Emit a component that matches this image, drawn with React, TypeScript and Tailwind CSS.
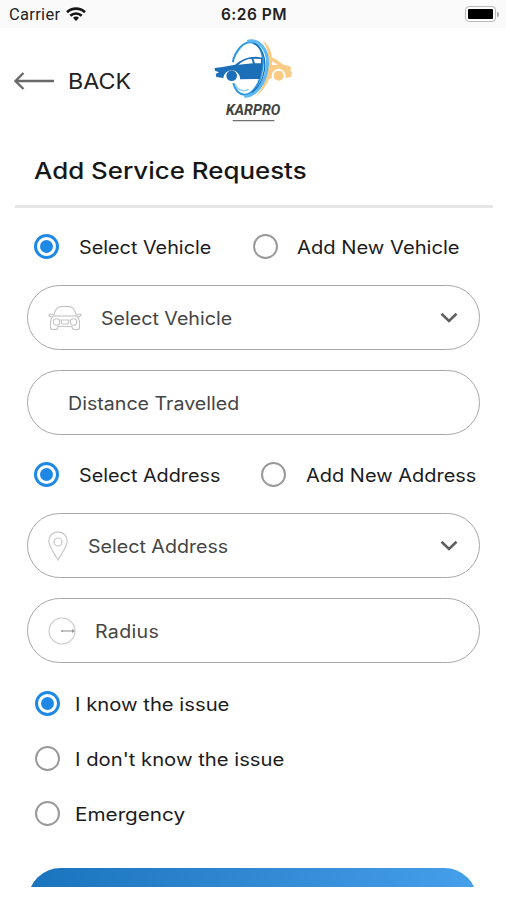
import React from 'react';
import clsx from 'clsx';

function Radio({ checked, label, className, labelClass }: { checked?: boolean; label: string; className?: string; labelClass?: string }) {
  return (
    <label className={clsx('flex items-center whitespace-nowrap text-[18px] leading-5 text-[#1c1c1c]', className)}>
      <span
        className={clsx(
          'flex size-[25px] shrink-0 items-center justify-center rounded-full',
          checked ? 'border-[3px] border-[#1e88e5]' : 'border-[2.5px] border-[#999]'
        )}
      >
        {checked && <span className="size-[13px] rounded-full bg-[#1e88e5]" />}
      </span>
      <span className={clsx('origin-left pt-[3px]', labelClass)}>{label}</span>
    </label>
  );
}

function Field({ icon, label, labelClass, select, className }: { icon?: React.ReactNode; label: string; labelClass?: string; select?: boolean; className?: string }) {
  return (
    <div className={clsx('flex h-[65px] items-center rounded-full border-[1.5px] border-[#a8a8a8] pr-[21px] pl-5 text-[18px] text-[#454545]', className)}>
      {icon}
      <span className={clsx('origin-left scale-x-[1.09] pt-0.5 whitespace-nowrap', labelClass)}>{label}</span>
      {select && (
        <svg className="ml-auto h-3 w-[18px]" viewBox="0 0 18 12" fill="none" stroke="#606060" strokeWidth="2.6">
          <path d="M1.5 1.8 9 9l7.5-7.2" />
        </svg>
      )}
    </div>
  );
}

function Logo() {
  return (
    <svg className="h-[84px] w-20" viewBox="39 27 240 252">
      <g transform="translate(30 20)">
        {/* rear car */}
        <g fill="#f9cb85">
          <path d="M158 14C181 24 190 58 185 94C181 130 162 163 137 178C158 154 170 124 174 90C178 56 172 32 158 14Z" />
          <path d="M182 61C198 66 208 74 217 83L240 89L244 96L240 101L246 107L243 121L226 124A21 21 0 1 0 186 124L176 127Z" />
          <circle cx="206" cy="117" r="15" />
        </g>
        <path d="M186 74L204 84L186 85Z" fill="#fff" />
        {/* ring */}
        <g fill="none">
          <path d="M68 77C76 42 99 15 124 17C151 21 163 54 157 96C151 139 129 174 104 174C87 173 75 160 70 139" stroke="#2d96df" strokeWidth="6" />
          <path d="M112 14C145 5 176 36 172 87C168 139 137 180 103 179" stroke="#5bb8f1" strokeWidth="9" />
          <path d="M130 20C155 29 169 62 163 101C157 134 143 156 125 167" stroke="#1971bb" strokeWidth="4" />
          <path d="M75 143C84 161 99 167 116 158" stroke="#8bd0f7" strokeWidth="4" />
        </g>
        {/* front car */}
        <path d="M14 94L38 91L75 84C94 68 113 60 137 60L158 63L157 90L150 127L90 128A24 24 0 1 0 40 124L19 121L17 112L27 107L15 102Z" fill="#1b6fb8" />
        <path d="M85 84C98 72 110 67 124 66L129 80Z" fill="#fff" />
        <path d="M130 66L153 67L153 80L135 80Z" fill="#fff" />
        <circle cx="65" cy="117" r="16" fill="#1b6fb8" />
      </g>
      <text x="78" y="254" textLength="163" lengthAdjust="spacingAndGlyphs" fontFamily="Roboto, sans-serif" fontSize="43" fontWeight="700" fontStyle="italic" fill="#424242">KARPRO</text>
      <path d="M98 272H223" stroke="#707070" strokeWidth="4" />
    </svg>
  );
}

function CarIcon() {
  return (
    <svg className="h-[26px] w-[34px] shrink-0" viewBox="0 0 34 26" fill="none" stroke="#c4c4c4" strokeWidth="1.1">
      <path d="M5.5 11C6.5 7 8 4 10 2.5C12 1 22 1 24 2.5C26 4 27.5 7 28.5 11" />
      <path d="M6 11H28" />
      <path d="M5.5 11C3 13 2.5 15 2.5 18V22.5Q2.5 24.5 4.5 24.5H8Q10 24.5 10 21.5H24Q24 24.5 26 24.5H29.5Q31.5 24.5 31.5 22.5V18C31.5 15 31 13 28.5 11" />
      <path d="M5.5 10.5C4 8.5 1 8.5 1 10Q1 11.5 4.5 12M28.5 10.5C30 8.5 33 8.5 33 10Q33 11.5 29.5 12" />
      <circle cx="8.5" cy="17" r="3.2" />
      <circle cx="25.5" cy="17" r="3.2" />
      <path d="M13 15H21L20 19H14Z" />
    </svg>
  );
}

function PinIcon() {
  return (
    <svg className="h-[30px] w-5 shrink-0" viewBox="0 0 20 30" fill="none" stroke="#c8c8c8" strokeWidth="1.2">
      <path d="M10 29C7 23 .8 16 .8 10A9.2 9.2 0 0 1 19.2 10C19.2 16 13 23 10 29Z" />
      <circle cx="10" cy="11" r="4" />
    </svg>
  );
}

function RadiusIcon() {
  return (
    <svg className="size-7 shrink-0" viewBox="0 0 28 28" fill="none" stroke="#c8c8c8" strokeWidth="1.1">
      <circle cx="14" cy="14" r="13" />
      <path d="M14 14H26" stroke="#999" />
      <circle cx="14" cy="14" r="1" fill="#999" stroke="none" />
      <path d="M24 12L27 14L24 16Z" fill="#999" stroke="none" />
    </svg>
  );
}

export default function App() {
  return (
    <div className="h-[900px] w-[506px] overflow-hidden bg-white font-['Inter',sans-serif]">
      {/* Status bar */}
      <div className="grid h-7 grid-cols-3 items-center bg-[#fafafa] pr-[7px] pl-[9px] text-[#222]">
        <div className="flex items-center gap-[6px]">
          <span className="pt-0.5 font-['Roboto',sans-serif] text-[16.5px] tracking-[0.3px]">Carrier</span>
          <svg className="h-[15px] w-5" viewBox="0 0 20 15" fill="none" stroke="#161616" strokeWidth="2.6">
            <path d="M1 5.2C6 .4 14 .4 19 5.2" />
            <path d="M4.3 8.8C7.5 5.7 12.5 5.7 15.7 8.8" />
            <path d="M7 10.8Q10 8.3 13 10.8L10 14Z" fill="#161616" stroke="none" />
          </svg>
        </div>
        <span className="pt-px text-center text-[15.5px] font-semibold tracking-[0.5px]">6:26 PM</span>
        <div className="flex items-center justify-end gap-px">
          <div className="h-4 w-[31px] rounded-[4px] border-[1.5px] border-[#bbb] p-[2px]">
            <div className="h-full rounded-[1px] bg-black" />
          </div>
          <div className="h-[5px] w-[2px] rounded-r bg-[#aaa]" />
        </div>
      </div>

      {/* Header */}
      <div className="grid h-[106px] grid-cols-3 pt-[11px]">
        <div className="flex h-[84px] items-center pl-[14px]">
          <svg className="h-[18px] w-10" viewBox="0 0 40 18" fill="none" stroke="#696969" strokeWidth="2.3">
            <path d="M40 9H1.5M9.5 1L1.5 9L9.5 17" />
          </svg>
          <span className="ml-[14px] origin-left scale-x-[1.08] text-[21.5px] text-[#222]">BACK</span>
        </div>
        <div className="flex justify-center">
          <Logo />
        </div>
      </div>

      <div className="mr-[13px] ml-[15px] flex h-[74px] border-b-[3px] border-[#e6e6e6] pt-[21px] pl-[19px]">
        <h1 className="origin-left scale-x-[1.125] text-[23px] leading-8 font-medium whitespace-nowrap text-[#161616]">Add Service Requests</h1>
      </div>

      {/* Form */}
      <div className="pr-[26px] pl-[27px]">
        <div className="flex h-[77px] items-center pl-[7px]">
          <Radio checked label="Select Vehicle" className="w-[219px]" labelClass="ml-5 scale-x-[1.1]" />
          <Radio label="Add New Vehicle" labelClass="ml-[19px] scale-x-[1.12]" />
        </div>
        <Field select icon={<CarIcon />} label="Select Vehicle" labelClass="ml-[19px]" />
        <Field label="Distance Travelled" className="mt-5" labelClass="ml-5" />

        <div className="flex h-[78px] items-center pl-[7px]">
          <Radio checked label="Select Address" className="w-[227px]" labelClass="ml-5 scale-x-[1.1]" />
          <Radio label="Add New Address" labelClass="ml-5 scale-x-[1.11]" />
        </div>
        <Field select icon={<PinIcon />} label="Select Address" labelClass="ml-5" />
        <Field icon={<RadiusIcon />} label="Radius" className="mt-5" labelClass="ml-[19px] tracking-[0.3px]" />

        <div className="mt-[28px] flex flex-col gap-[30px] pl-2">
          <Radio checked label="I know the issue" labelClass="ml-[15px] scale-x-[1.125]" />
          <Radio label="I don't know the issue" labelClass="ml-[15px] scale-x-[1.125]" />
          <Radio label="Emergency" labelClass="ml-[15px] scale-x-[1.15]" />
        </div>

        {/* Submit button, only its top edge is in view */}
        <div className="mt-[42px] mr-[3px] ml-px h-[19px] overflow-hidden">
          <div className="h-[65px] rounded-full bg-linear-to-r from-[#1973bd] to-[#469feb]" />
        </div>
      </div>
    </div>
  );
}
